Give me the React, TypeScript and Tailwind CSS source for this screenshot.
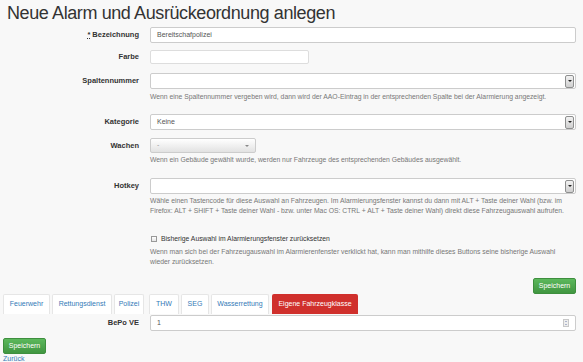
import type { ReactNode } from "react";

function Row({ label, mt, h, children, star }: { label: string; mt: string; h: string; children: ReactNode; star?: boolean }) {
  return (
    <div className={`flex ${mt}`}>
      <div className={`flex w-[147px] shrink-0 items-center justify-end pr-[11px] text-[7.5px] font-bold text-[#333] ${h}`}>
        {star && <span className="mr-[2px] underline decoration-dotted">*</span>}
        {label}
      </div>
      <div className="w-[426px]">{children}</div>
    </div>
  );
}

function SelectBox({ value }: { value?: string }) {
  return (
    <div className="flex h-[16px] items-center justify-between rounded-[2px] border border-[#ccc] bg-white pl-[6px] pr-[1px] text-[7px] text-[#555]">
      <span>{value}</span>
      <span className="flex h-[13px] w-[9px] items-center justify-center rounded-[2px] border border-[#8e8f8f] bg-gradient-to-b from-[#f2f2f2] to-[#cfcfcf]">
        <span className="h-0 w-0 border-x-[2px] border-t-[2px] border-x-transparent border-t-[#222]" />
      </span>
    </div>
  );
}

function Help({ children, mt }: { children: ReactNode; mt: string }) {
  return <p className={`${mt} whitespace-nowrap text-[6.8px] leading-[10px] text-[#777]`}>{children}</p>;
}

const tabs = [
  { name: "Feuerwehr", w: "w-[47px]", ml: "ml-0" },
  { name: "Rettungsdienst", w: "w-[60px]", ml: "ml-[2px]" },
  { name: "Polizei", w: "w-[30px]", ml: "ml-[2px]" },
  { name: "THW", w: "w-[30px]", ml: "ml-[5px]" },
  { name: "SEG", w: "w-[28px]", ml: "ml-[2px]" },
  { name: "Wasserrettung", w: "w-[58px]", ml: "ml-[2px]" },
];

export default function App() {
  return (
    <div className="h-[362px] overflow-hidden bg-[#f8f8f8] px-[3px] font-['Liberation_Sans',Arial,sans-serif] text-[#333]">
      <h1 className="h-[27px] pl-[4px] pt-[2px] text-[18px] leading-[22px] tracking-[-0.4px] text-[#333]">
        Neue Alarm und Ausrückeordnung anlegen
      </h1>

      <Row label="Bezeichnung" mt="mt-0" h="h-[16px]" star>
        <div className="flex h-[16px] items-center rounded-[2px] border border-[#ccc] bg-white pl-[6px] text-[7px] text-[#555]">
          Bereitschafpolizei
        </div>
      </Row>

      <Row label="Farbe" mt="mt-[7px]" h="h-[14px]">
        <div className="h-[14px] w-[159px] rounded-[2px] border border-[#ddd] bg-white" />
      </Row>

      <Row label="Spaltennummer" mt="mt-[9px]" h="h-[16px]">
        <SelectBox />
        <Help mt="mt-[3px]">
          Wenn eine Spaltennummer vergeben wird, dann wird der AAO-Eintrag in der entsprechenden Spalte bei der Alarmierung angezeigt.
        </Help>
      </Row>

      <Row label="Kategorie" mt="mt-[12px]" h="h-[16px]">
        <SelectBox value="Keine" />
      </Row>

      <Row label="Wachen" mt="mt-[8px]" h="h-[15px]">
        <div className="flex h-[15px] w-[106px] items-center justify-between rounded-[2px] border border-[#ccc] bg-gradient-to-b from-white to-[#e2e2e2] px-[6px] text-[7px] text-[#999]">
          <span>-</span>
          <span className="h-0 w-0 border-x-[2px] border-t-[2px] border-x-transparent border-t-[#888]" />
        </div>
        <Help mt="mt-[2px]">
          Wenn ein Gebäude gewählt wurde, werden nur Fahrzeuge des entsprechenden Gebäudes ausgewählt.
        </Help>
      </Row>

      <Row label="Hotkey" mt="mt-[13px]" h="h-[16px]">
        <SelectBox />
        <Help mt="mt-[2px]">
          Wähle einen Tastencode für diese Auswahl an Fahrzeugen. Im Alarmierungsfenster kannst du dann mit ALT + Taste deiner Wahl (bzw. im
          <br />
          Firefox: ALT + SHIFT + Taste deiner Wahl - bzw. unter Mac OS: CTRL + ALT + Taste deiner Wahl) direkt diese Fahrzeugauswahl aufrufen.
        </Help>
      </Row>

      <div className="ml-[147px] mt-[18px] w-[426px]">
        <label className="flex h-[10px] items-center text-[6.8px] text-[#333]">
          <span className="mr-[4px] ml-[1px] h-[6px] w-[6px] border border-[#999] bg-gradient-to-b from-white to-[#e6e6e6]" />
          Bisherige Auswahl im Alarmierungsfenster zurücksetzen
        </label>
        <Help mt="mt-[3px]">
          Wenn man sich bei der Fahrzeugauswahl im Alarmierenfenster verklickt hat, kann man mithilfe dieses Buttons seine bisherige Auswahl
          <br />
          wieder zurücksetzen.
        </Help>
      </div>

      <div className="mt-[11px] flex justify-end pr-[4px]">
        <button className="h-[16px] w-[43px] rounded-[2px] border border-[#3e8f3e] bg-gradient-to-b from-[#5cb85c] to-[#419641] text-[7px] text-white">
          Speichern
        </button>
      </div>

      <div className="flex h-[20px]">
        {tabs.map((t) => (
          <div
            key={t.name}
            className={`${t.ml} ${t.w} flex h-[20px] items-center justify-center rounded-t-[2px] border border-b-0 border-[#e6e6e6] bg-white text-[7px] text-[#337ab7]`}
          >
            {t.name}
          </div>
        ))}
        <div className="ml-[3px] flex h-[20px] w-[86px] items-center justify-center rounded-t-[2px] bg-[#d0302c] text-[7px] text-white">
          Eigene Fahrzeugklasse
        </div>
      </div>

      <Row label="BePo VE" mt="mt-[1px]" h="h-[16px]">
        <div className="flex h-[16px] items-center justify-between rounded-[2px] border border-[#ccc] bg-white pl-[6px] pr-[6px] text-[7px] text-[#555]">
          <span>1</span>
          <span className="flex h-[8px] w-[6px] flex-col items-center justify-around border border-[#c8c8c8] bg-[#eee]">
            <span className="h-0 w-0 border-x-[1.5px] border-b-[1.5px] border-x-transparent border-b-[#6b7aa8]" />
            <span className="h-0 w-0 border-x-[1.5px] border-t-[1.5px] border-x-transparent border-t-[#6b7aa8]" />
          </span>
        </div>
      </Row>

      <button className="mt-[7px] block h-[16px] w-[43px] rounded-[2px] border border-[#3e8f3e] bg-gradient-to-b from-[#5cb85c] to-[#419641] text-[7px] text-white">
        Speichern
      </button>
      <a className="block text-[7px] leading-[10px] text-[#337ab7]" href="#">
        Zurück
      </a>
    </div>
  );
}
